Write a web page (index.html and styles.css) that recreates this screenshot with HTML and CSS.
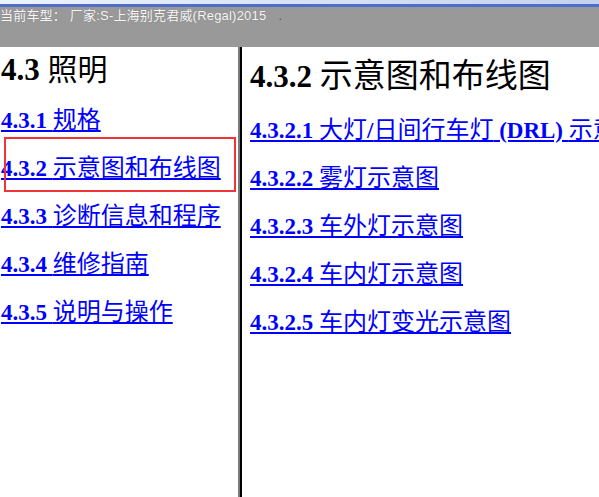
FILE: index.html
```html
<!DOCTYPE html>
<html lang="zh-CN">
<head>
    <meta charset="UTF-8">
    <title>4.3 照明</title>
    <link rel="stylesheet" href="styles.css">
</head>
<body>
    <div class="titlebar"></div>
    <div class="infobar">当前车型： 厂家:S-上海别克君威(Regal)2015<span class="dot">.</span></div>

    <div class="frames">
        <div class="toc">
            <h2 class="heading">4.3 <span class="cjk">照明</span></h2>
            <a class="link" href="#">4.3.1 <span class="cjk">规格</span></a>
            <a class="link" href="#">4.3.2 <span class="cjk">示意图和布线图</span></a>
            <a class="link" href="#">4.3.3 <span class="cjk">诊断信息和程序</span></a>
            <a class="link" href="#">4.3.4 <span class="cjk">维修指南</span></a>
            <a class="link" href="#">4.3.5 <span class="cjk">说明与操作</span></a>
            <!-- highlight around the open section -->
            <div class="mark"></div>
        </div>
        <div class="splitter"></div>
        <div class="content">
            <h1 class="heading big">4.3.2 <span class="cjk">示意图和布线图</span></h1>
            <a class="link" href="#">4.3.2.1 <span class="cjk">大灯</span>/<span class="cjk">日间行车灯</span> (DRL) <span class="cjk">示意图</span></a>
            <a class="link" href="#">4.3.2.2 <span class="cjk">雾灯示意图</span></a>
            <a class="link" href="#">4.3.2.3 <span class="cjk">车外灯示意图</span></a>
            <a class="link" href="#">4.3.2.4 <span class="cjk">车内灯示意图</span></a>
            <a class="link" href="#">4.3.2.5 <span class="cjk">车内灯变光示意图</span></a>
        </div>
    </div>
</body>
</html>
```

FILE: styles.css
```css
html, body {
    height: 100%;
}
body {
    margin: 0;
    display: flex;
    flex-direction: column;
    overflow: hidden;
    background-color: white;
    font-family: "Liberation Serif", "Noto Sans CJK SC", serif;
}
.titlebar {
    height: 4px;
    background: linear-gradient(to right, #eef2fc, #c4d2f0);
    border-bottom: 3px solid #4d6fc9;
}
.infobar {
    height: 40px;
    background-color: #999999;
    color: #f6f6f6;
    font-family: "Liberation Sans", "Noto Sans CJK SC", sans-serif;
    font-size: 13px;
    letter-spacing: 0.2px;
    line-height: 18px;
    white-space: nowrap;
    text-shadow: 0 0 1px #777;
}
.dot {
    margin-left: 12px;
    color: #555;
    text-shadow: none;
}
.frames {
    flex: 1;
    display: flex;
    min-height: 0;
}
.toc {
    position: relative;
    width: 238px;
    padding-left: 1px;
    box-sizing: border-box;
}
.splitter {
    width: 2px;
    background-color: #7a7a7a;
    border-right: 2px solid black;
}
.content {
    flex: 1;
    padding-left: 8px;
    overflow: hidden;
    white-space: nowrap;
}
.heading {
    margin: 3px 0 0 0;
    font-size: 31px;
    line-height: 40px;
    font-weight: bold;
    color: black;
    white-space: nowrap;
}
.heading .cjk {
    font-size: 30px;
    font-weight: normal;
    line-height: 30px;
}
.heading.big {
    margin-top: 10px;
}
.heading.big .cjk {
    font-size: 33px;
    line-height: 30px;
}
.link {
    display: block;
    margin-top: 0;
    font-size: 23px;
    line-height: 48px;
    font-weight: bold;
    color: #0000ff;
    text-decoration: underline;
    white-space: nowrap;
}
.toc .heading + .link {
    margin-top: 7px;
}
.content .heading + .link {
    margin-top: 10px;
}
.link .cjk {
    font-size: 24px;
    font-weight: normal;
    line-height: 1;
}
.mark {
    position: absolute;
    left: 4px;
    top: 90px;
    width: 228px;
    height: 51px;
    border: 2px solid #ef3535;
}
```
